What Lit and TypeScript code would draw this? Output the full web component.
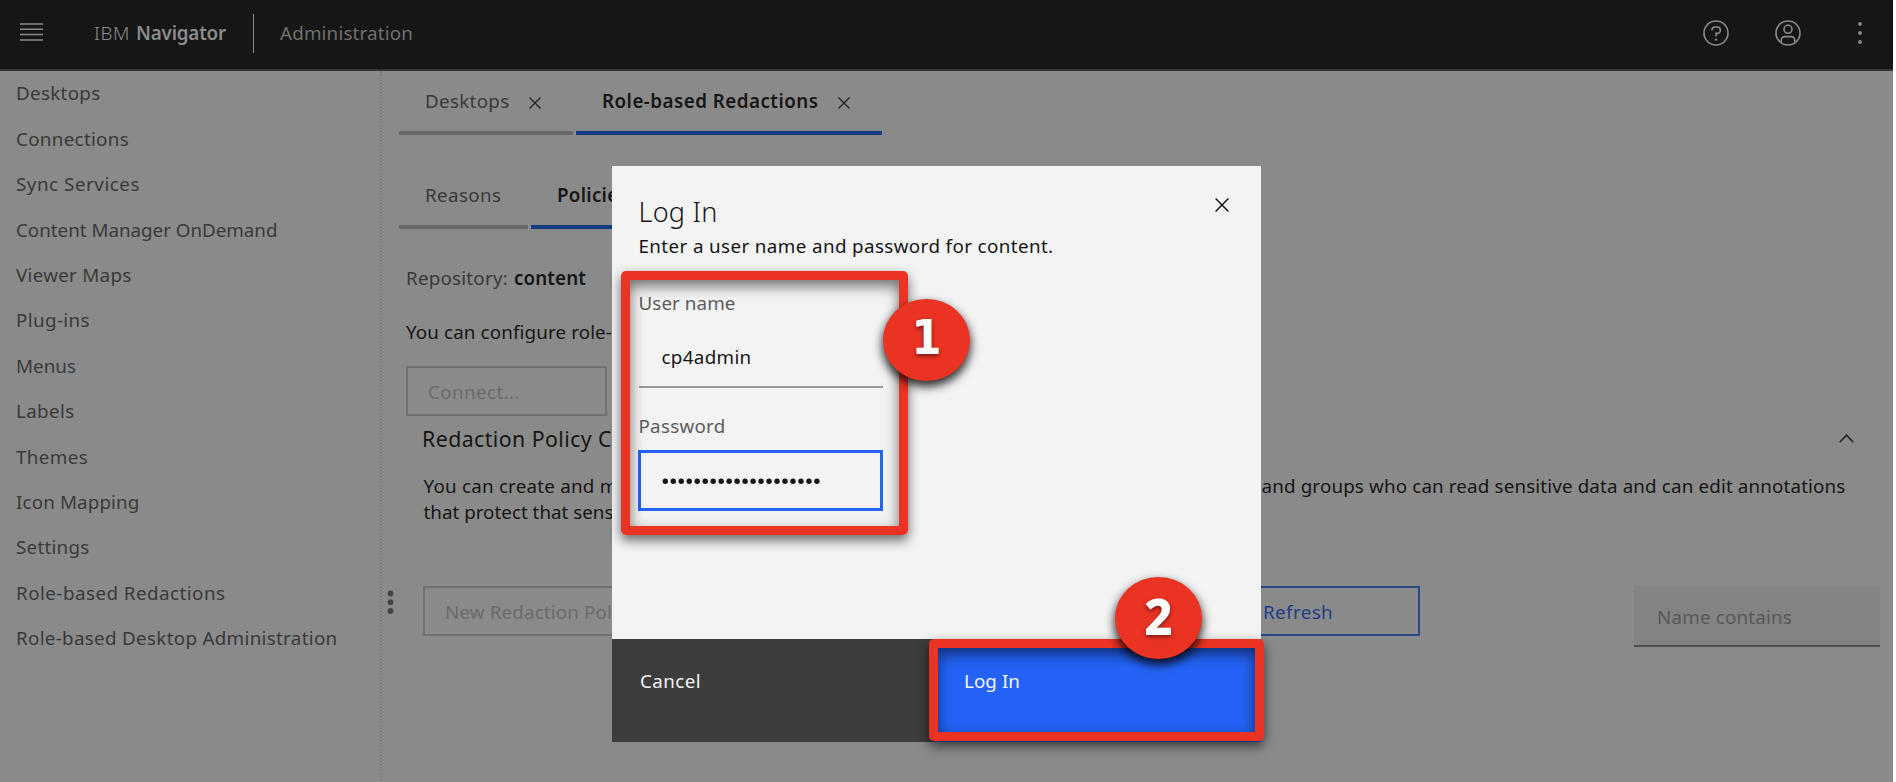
import { LitElement, html, css, svg } from "lit";
import { customElement, property } from "lit/decorators.js";

/* A single line of text, tracked so that it fills the given width. */
@customElement("fit-text")
class FitText extends LitElement {
  @property({ type: Number }) w = 0;
  @property() text = "";
  static styles = css`
    :host { display: inline-block; white-space: pre; }
  `;
  render() {
    return html`<span>${this.text}</span>`;
  }
  async updated() {
    await document.fonts.ready;
    const span = this.renderRoot.querySelector("span") as HTMLElement;
    span.style.letterSpacing = "0px";
    const natural = span.getBoundingClientRect().width;
    if (this.w > 0) span.style.letterSpacing = (this.w - natural) / this.text.length + "px";
  }
}

const t = (text: string, w: number, cls = "") => html`<fit-text class=${cls} .text=${text} .w=${w}></fit-text>`;

const NAV: [string, number][] = [
  ["Desktops", 84.5], ["Connections", 113], ["Sync Services", 124], ["Content Manager OnDemand", 261.5],
  ["Viewer Maps", 115.5], ["Plug-ins", 74], ["Menus", 60], ["Labels", 58.5], ["Themes", 72],
  ["Icon Mapping", 123.5], ["Settings", 73.5], ["Role-based Redactions", 209.5],
  ["Role-based Desktop Administration", 321.5],
];

const cross = (s: number, sw: number) => html`<svg width=${s} height=${s} viewBox="0 0 12 12">
  ${svg`<path d="M.5 .5L11.5 11.5M11.5 .5L.5 11.5" fill="none" stroke="currentColor" stroke-width=${sw} />`}</svg>`;

@customElement("app-root")
class AppRoot extends LitElement {
  static styles = css`
    :host {
      display: block; position: relative; width: 1893px; height: 782px; overflow: hidden;
      background: #8a8a8a; color: #161616;
      font: 18.8px/24px "Noto Sans", sans-serif;
    }
    * { box-sizing: border-box; }
    svg { display: block; flex: none; }
    .row { display: flex; }
    header {
      height: 71px; background: #161616; border-bottom: 2px solid #353535; color: #8b8b8b;
      display: flex; align-items: flex-start; padding: 0 20px 0 20px;
    }
    .burger { margin-top: 23px; width: 23px; }
    .ibm { margin: 21px 0 0 51px; font-weight: 300; }
    .prod { margin: 21px 0 0 6px; font-weight: 600; }
    .rule { margin: 14px 0 0 27px; width: 1px; height: 39px; background: #8b8b8b; }
    .admin { margin: 21px 0 0 26px; color: #707070; }
    .tools { margin: 20px 0 0 auto; display: flex; gap: 46px; }
    .body { display: flex; height: 711px; }
    nav { width: 380px; padding: 10.4px 0 0 16px; color: #393939; }
    .item { height: 45.4px; line-height: 24px; }
    .splitter {
      width: 19px; padding: 518px 0 0 7px; color: #444;
      background: repeating-linear-gradient(#777 0 1.5px, #8a8a8a 1.5px 3px) 0 0 / 2px 100% no-repeat;
    }
    main { flex: 1; min-width: 0; }
    .tabs { display: flex; gap: 3px; }
    .tab { height: 64px; padding: 18px 0 0 26px; border-bottom: 4px solid #696969; color: #393939; display: flex; }
    .tab svg { margin: 8px 0 0 19px; color: #222; }
    .tab.on { border-color: #173c86; color: #161616; font-weight: 600; }
    .tabs.second { margin-top: 30px; }
    .repo { margin: 37px 0 0 7px; height: 24px; color: #393939; }
    .repo b { font-weight: 600; color: #161616; margin-left: 6px; }
    .conf { margin: 30px 0 0 7px; }
    .btn { border: 2px solid #717171; color: #6b6b6b; height: 50px; padding: 12px 0 0 20px; }
    .connect { width: 201px; margin: 22px 0 0 7px; }
    .sec { display: flex; justify-content: space-between; margin: 9px 39px 0 23px; font-size: 21.3px; line-height: 28px; }
    .sec svg { margin-top: 9px; }
    .para { margin: 20px 0 0 24.5px; line-height: 26.3px; }
    .para .row { height: 26.3px; }
    .bar { display: flex; margin: 60.4px 0 0 24px; }
    .newp { width: 300px; }
    .refresh { width: 300px; margin-left: 397px; border-color: #274788; color: #1c3f87; padding-left: 141px; }
    .search { margin-left: 214px; width: 246px; height: 61px; background: #838383; border-bottom: 2px solid #505050; color: #585858; padding: 19px 0 0 23px; }
    .modal {
      position: absolute; left: 612px; top: 166px; width: 649px; height: 576px;
      background: #f3f3f3; display: flex; flex-direction: column;
    }
    .mhead { display: flex; justify-content: space-between; padding: 30px 32px 0 26.5px; height: 65px; }
    .mhead svg { margin-top: 1.5px; }
    .title { font-size: 27px; line-height: 32px; font-weight: 350; }
    .mbody { padding: 3px 0 0 26.5px; flex: 1; }
    .label { margin-top: 33px; height: 24px; color: #5b5b5b; }
    .input { margin: 7px 0 0; width: 244px; height: 66px; border-bottom: 2px solid #999; padding: 23px 0 0 23px; }
    .label.pw { margin-top: 26px; }
    .pwd { margin: 12px 0 0 -1px; width: 245px; height: 61px; border: 3px solid #2563f5; padding: 25px 0 0 20px; }
    .mfoot { display: flex; height: 103.5px; color: #f5f5f5; }
    .cancel { width: 323px; background: #3d3d3d; padding: 30px 0 0 28px; }
    .login { flex: 1; background: #2463f6; padding: 30px 0 0 29px; }
    .mark {
      position: absolute; border: 9px solid #eb3323; border-radius: 5px;
      box-shadow: 0 5px 12px rgba(0, 0, 0, .6), inset 0 6px 14px rgba(0, 0, 0, .55);
    }
    .m1 { left: 621px; top: 271px; width: 287px; height: 264px; }
    .m2 { left: 929px; top: 639px; width: 335px; height: 102px; }
    .badge {
      position: absolute; width: 87px; height: 82px; border-radius: 50%; background: #eb3323; color: #fff;
      display: flex; justify-content: center; box-shadow: 0 5px 10px 1px rgba(0, 0, 0, .8);
      font: bold 48px/76px "DejaVu Sans Condensed", "DejaVu Sans", sans-serif; text-shadow: 0 2px 4px rgba(0, 0, 0, .5);
    }
    .b1 { left: 883px; top: 299px; }
    .b2 { left: 1115px; top: 577px; font: 800 49px/78px "Noto Sans", sans-serif; }
  `;

  render() {
    return html`
      <header>
        <svg class="burger" width="23" height="19" viewBox="0 0 23 19"><path d="M0 1H23M0 6.3H23M0 11.6H23M0 17H23" stroke="#8b8b8b" stroke-width="1.5" /></svg>
        ${t("IBM", 36, "ibm")}${t("Navigator", 90, "prod")}
        <div class="rule"></div>
        ${t("Administration", 133, "admin")}
        <div class="tools">
          <svg width="26" height="26" viewBox="0 0 26 26" fill="none" stroke="#8b8b8b" stroke-width="1.6"><circle cx="13" cy="13" r="12" /><path d="M9 10.6V10a3 3 0 0 1 3-3h2.2a3 3 0 0 1 0 6.4H13v3" /><circle cx="13" cy="19.6" r="1.2" fill="#8b8b8b" stroke="none" /></svg>
          <svg width="26" height="26" viewBox="0 0 26 26" fill="none" stroke="#8b8b8b" stroke-width="1.6"><circle cx="13" cy="13" r="12" /><circle cx="13" cy="9.3" r="4" /><path d="M6.3 22.5V20a3.4 3.4 0 0 1 3.4-3.4h6.6a3.4 3.4 0 0 1 3.4 3.4v2.5" /></svg>
          <svg width="26" height="26" viewBox="0 0 26 26" fill="#8b8b8b"><circle cx="13" cy="4" r="1.9" /><circle cx="13" cy="13" r="1.9" /><circle cx="13" cy="22" r="1.9" /></svg>
        </div>
      </header>
      <div class="body">
        <nav>${NAV.map(([n, w]) => html`<div class="item">${t(n, w)}</div>`)}</nav>
        <div class="splitter">
          <svg width="7" height="26" viewBox="0 0 7 26" fill="currentColor"><circle cx="3.5" cy="4.5" r="2.9" /><circle cx="3.5" cy="13.2" r="2.9" /><circle cx="3.5" cy="22" r="2.9" /></svg>
        </div>
        <main>
          <div class="tabs">
            <div class="tab" style="width:174px">${t("Desktops", 84.5)}${cross(12, 1.3)}</div>
            <div class="tab on" style="width:306px">${t("Role-based Redactions", 216.5)}${cross(12, 1.3)}</div>
          </div>
          <div class="tabs second">
            <div class="tab" style="width:129px">${t("Reasons", 76.5)}</div>
            <div class="tab on" style="width:140px">${t("Policies", 71)}</div>
          </div>
          <div class="repo row">${t("Repository:", 102)}<b>${t("content", 72)}</b></div>
          <div class="conf">${t("You can configure role-", 206)}</div>
          <div class="btn connect">${t("Connect...", 92)}</div>
          <div class="sec">${t("Redaction Policy C", 190)}
            <svg width="15" height="9" viewBox="0 0 15 9"><path d="M.7 8.3L7.5 1.2L14.3 8.3" fill="none" stroke="#222" stroke-width="1.5" /></svg>
          </div>
          <div class="para">
            <div class="row"><div style="width:838px">${t("You can create and m", 194)}</div>${t("and groups who can read sensitive data and can edit annotations", 584)}</div>
            <div class="row">${t("that protect that sens", 190)}</div>
          </div>
          <div class="bar">
            <div class="btn newp">${t("New Redaction Pol", 167)}</div>
            <div class="btn refresh">${t("Refresh", 70)}</div>
            <div class="search">${t("Name contains", 135)}</div>
          </div>
        </main>
      </div>
      <section class="modal">
        <div class="mhead"><div class="title">${t("Log In", 79)}</div>${cross(14, 1.3)}</div>
        <div class="mbody">
          <div>${t("Enter a user name and password for content.", 415)}</div>
          <div class="label">${t("User name", 97)}</div>
          <div class="input">${t("cp4admin", 90)}</div>
          <div class="label pw">${t("Password", 87)}</div>
          <div class="pwd">
            <svg width="165" height="7" viewBox="0 0 165 7">${Array.from({ length: 20 }, (_, i) => svg`<circle cx=${4.3 + i * 7.98} cy="3.2" r="2.7" fill="#161616" />`)}</svg>
          </div>
        </div>
        <div class="mfoot">
          <div class="cancel">${t("Cancel", 61)}</div>
          <div class="login">${t("Log In", 56)}</div>
        </div>
      </section>
      <div class="mark m1"></div>
      <div class="mark m2"></div>
      <div class="badge b1">1</div>
      <div class="badge b2">2</div>
    `;
  }
}
